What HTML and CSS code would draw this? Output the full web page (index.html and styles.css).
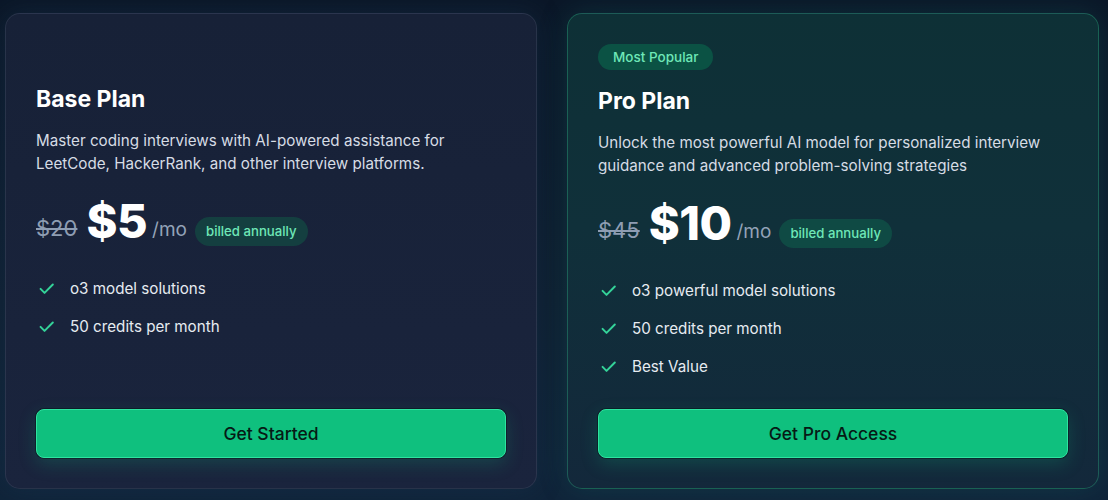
FILE: index.html
```html
<!DOCTYPE html>
<html lang="en">
<head>
<meta charset="utf-8">
<title>Pricing</title>
<link rel="stylesheet" href="styles.css">
</head>
<body>
<main class="plans">
  <section class="card card-base">
    <div class="badge-spacer"></div>
    <h2 class="title">Base Plan</h2>
    <p class="desc">Master coding interviews with AI-powered assistance for LeetCode, HackerRank, and other interview platforms.</p>
    <div class="price-row">
      <span class="old">$20</span>
      <span class="price">$5</span>
      <span class="per">/mo</span>
      <span class="pill">billed annually</span>
    </div>
    <ul class="features">
      <li><svg class="check" viewBox="0 0 24 24"><path d="M4.5 12.5l5 5L20 7"/></svg><span>o3 model solutions</span></li>
      <li><svg class="check" viewBox="0 0 24 24"><path d="M4.5 12.5l5 5L20 7"/></svg><span>50 credits per month</span></li>
    </ul>
    <button class="cta">Get Started</button>
  </section>
  <section class="card card-pro">
    <span class="popular">Most Popular</span>
    <h2 class="title">Pro Plan</h2>
    <p class="desc">Unlock the most powerful AI model for personalized interview guidance and advanced problem-solving strategies</p>
    <div class="price-row">
      <span class="old">$45</span>
      <span class="price">$10</span>
      <span class="per">/mo</span>
      <span class="pill">billed annually</span>
    </div>
    <ul class="features">
      <li><svg class="check" viewBox="0 0 24 24"><path d="M4.5 12.5l5 5L20 7"/></svg><span>o3 powerful model solutions</span></li>
      <li><svg class="check" viewBox="0 0 24 24"><path d="M4.5 12.5l5 5L20 7"/></svg><span>50 credits per month</span></li>
      <li><svg class="check" viewBox="0 0 24 24"><path d="M4.5 12.5l5 5L20 7"/></svg><span>Best Value</span></li>
    </ul>
    <button class="cta">Get Pro Access</button>
  </section>
</main>
</body>
</html>
```
FILE: styles.css
```css
* { box-sizing: border-box; }
html, body { height: 100%; }
body {
  margin: 0;
  background: linear-gradient(180deg, #0b1728 0%, #0f1f31 60%, #10243a 100%);
  font-family: Inter, "Noto Sans", "Liberation Sans", sans-serif;
  color: #fff;
  overflow: hidden;
}
.plans {
  display: flex;
  gap: 30px;
  padding: 13px 0 0 5px;
}
.card {
  width: 532px;
  height: 476px;
  border-radius: 15px;
  padding: 30px;
  display: flex;
  flex-direction: column;
  align-items: flex-start;
}
.card-base {
  background: linear-gradient(180deg, #172137 0%, #1a243d 100%);
  border: 1px solid rgba(148, 163, 184, 0.14);
  box-shadow: 0 0 24px rgba(30, 60, 90, 0.35);
}
.card-pro {
  background: linear-gradient(180deg, #0e3036 0%, #10303a 45%, #13283b 100%);
  border: 1px solid rgba(52, 211, 153, 0.3);
  box-shadow: 0 0 28px rgba(20, 120, 110, 0.25);
}
.badge-spacer { height: 24px; margin-bottom: 17px; }
.popular {
  height: 26px;
  line-height: 26px;
  padding: 0 15px;
  border-radius: 13px;
  background: #0b5244;
  color: #6ee7b7;
  font-size: 13.5px;
  font-weight: 500;
  margin-bottom: 17px;
}
.title {
  margin: 0;
  font-size: 23px;
  line-height: 28px;
  font-weight: 700;
  color: #ffffff;
}
.desc {
  margin: 16px 0 0;
  font-size: 15.2px;
  line-height: 23px;
  color: #d6dce5;
  max-width: 465px;
}
.card-pro .desc { max-width: 470px; }
.price-row {
  margin-top: 22px;
  display: flex;
  align-items: center;
  height: 48px;
}
.old {
  font-size: 22px;
  color: #8e9db3;
  text-decoration: line-through;
  text-decoration-thickness: 1.5px;
  margin-right: 9px;
  margin-top: 14px;
}
.price {
  font-size: 47px;
  font-weight: 800;
  letter-spacing: -0.5px;
  color: #ffffff;
  line-height: 48px;
}
.per {
  font-size: 19px;
  color: #94a3b8;
  margin-left: 5px;
  margin-top: 16px;
}
.pill {
  margin-left: 8px;
  margin-top: 20px;
  height: 29px;
  line-height: 29px;
  padding: 0 11px;
  border-radius: 15px;
  background: #143f40;
  color: #6ee7b7;
  font-size: 13.2px;
  font-weight: 500;
}
.card-pro .pill { background: #0f4a44; }
.features {
  list-style: none;
  margin: 31px 0 0;
  padding: 0;
  display: flex;
  flex-direction: column;
  gap: 14px;
}
.features li {
  display: flex;
  align-items: center;
  gap: 14px;
  height: 24px;
  font-size: 15.2px;
  color: #e6ebf1;
}
.check {
  width: 19px;
  height: 19px;
  margin-left: 1px;
  fill: none;
  stroke: #34d399;
  stroke-width: 2.5;
  stroke-linecap: round;
  stroke-linejoin: round;
}
.cta {
  margin-top: auto;
  width: 100%;
  height: 49px;
  border-radius: 8px;
  border: 1px solid #2ee3a0;
  background: #0fc07e;
  color: #061a15;
  font-family: Inter, "Noto Sans", "Liberation Sans", sans-serif;
  font-size: 17.5px;
  font-weight: 500;
  box-shadow: 0 0 0 1px rgba(0, 0, 0, 0.35), 0 6px 18px rgba(16, 185, 129, 0.22);
}
```
